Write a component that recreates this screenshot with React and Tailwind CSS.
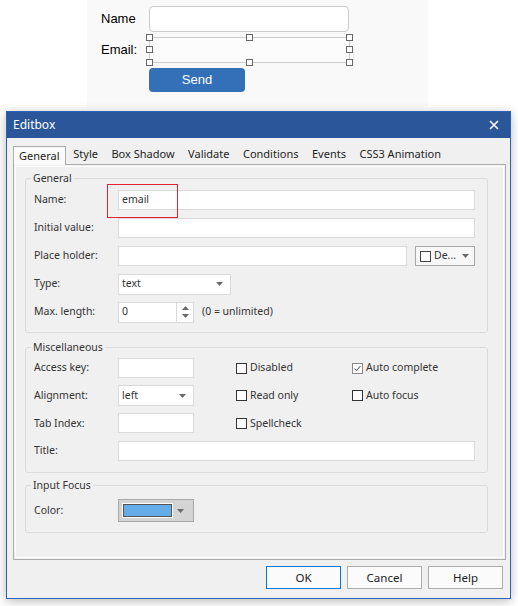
import React from 'react';

const ui = { fontFamily: '"Noto Sans", "Open Sans", sans-serif' };

const Caret = ({ up = false }) => (
    <svg width="7" height="4" viewBox="0 0 7 4">
        <path d={up ? 'M0 4L3.5 0L7 4Z' : 'M0 0L7 0L3.5 4Z'} fill="#6b6b6b" />
    </svg>
);

const Handle = ({ className }) => (
    <span className={`absolute w-[7px] h-[7px] border border-[#666] bg-white ${className}`} />
);

const CheckBox = ({ label, checked = false }) => (
    <div className="flex items-center gap-[3px]">
        <span
            className={`w-[11px] h-[11px] border bg-white flex items-center justify-center ${
                checked ? 'border-[#8a8a8a]' : 'border-[#333]'
            }`}
        >
            {checked && (
                <svg width="9" height="9" viewBox="0 0 9 9">
                    <path d="M1.5 4.5L3.5 6.5L7.5 2" fill="none" stroke="#444" strokeWidth="1" />
                </svg>
            )}
        </span>
        <span>{label}</span>
    </div>
);

const Row = ({ label, children, className = '' }) => (
    <div className={`flex items-center h-[20px] ${className}`}>
        <span className="w-[84px] shrink-0">{label}</span>
        {children}
    </div>
);

const Field = ({ className = '', children }) => (
    <div className={`h-[20px] border border-[#d9d9d9] bg-white flex items-center pl-[3px] ${className}`}>
        {children}
    </div>
);

const Select = ({ value, className = '' }) => (
    <div className={`h-[21px] border border-[#d9d9d9] bg-white flex items-center justify-between pl-[3px] pr-[7px] ${className}`}>
        <span>{value}</span>
        <Caret />
    </div>
);

const Group = ({ title, className = '', children }) => (
    <fieldset className={`ml-[11px] w-[463px] border border-[#dcdcdc] rounded-[3px] pl-[8px] pr-[12px] ${className}`}>
        <legend className="-ml-[3px] px-[2px] leading-[16px]">{title}</legend>
        {children}
    </fieldset>
);

const tabs = ['Style', 'Box Shadow', 'Validate', 'Conditions', 'Events', 'CSS3 Animation'];

export default function App() {
    return (
        <div className="w-[518px] h-[606px] bg-white overflow-hidden">
            {/* Form preview */}
            <div
                className="ml-[87px] w-[341px] h-[107px] bg-[#f9f9f9] pl-[14px] pt-[6px] text-[13px] text-black"
                style={{ fontFamily: '"Liberation Sans", Arial, sans-serif' }}
            >
                <div className="flex items-center h-[26px]">
                    <span className="w-[48px]">Name</span>
                    <div className="w-[200px] h-[26px] bg-white border border-[#cccccc] rounded-[4px]" />
                </div>
                <div className="flex items-center h-[26px] mt-[5px]">
                    <span className="w-[48px]">Email:</span>
                    <div className="relative w-[201px] h-[26px] border border-[#cccccc] bg-[#fcfcfc]">
                        <Handle className="-left-[4px] -top-[4px]" />
                        <Handle className="left-[96px] -top-[4px]" />
                        <Handle className="-right-[4px] -top-[4px]" />
                        <Handle className="-left-[4px] top-[8px]" />
                        <Handle className="-right-[4px] top-[8px]" />
                        <Handle className="-left-[4px] -bottom-[4px]" />
                        <Handle className="left-[96px] -bottom-[4px]" />
                        <Handle className="-right-[4px] -bottom-[4px]" />
                    </div>
                </div>
                <div className="mt-[5px] ml-[48px] w-[96px] h-[24px] bg-[#3370b7] rounded-[4px] text-white flex items-center justify-center">
                    Send
                </div>
            </div>

            {/* Dialog */}
            <div
                className="ml-[6px] mt-[4px] w-[505px] h-[488px] border border-[#2a62b8] bg-[#f0f0f0] shadow-[0_2px_10px_rgba(0,0,0,0.28)]"
                style={ui}
            >
                <div className="h-[26px] bg-[#2b579a] flex items-center justify-between pl-[6px] pr-[11px] text-white text-[12px]">
                    <span>Editbox</span>
                    <svg width="10" height="10" viewBox="0 0 10 10">
                        <path d="M1 1L9 9M9 1L1 9" stroke="white" strokeWidth="1.6" />
                    </svg>
                </div>

                <div className="pt-[8px] text-[11px] text-[#1e1e1e]">
                    {/* Tabs */}
                    <div className="flex h-[18px] ml-[6px]">
                        <div className="relative z-10 h-[19px] px-[5px] border border-b-0 border-[#adadad] bg-[#fafafa] flex items-center pt-[1px]">
                            General
                        </div>
                        <div className="flex ml-[1px]">
                            {tabs.map((t) => (
                                <div key={t} className="px-[6.75px] flex items-center pb-[1px]">
                                    {t}
                                </div>
                            ))}
                        </div>
                    </div>

                    {/* Tab page */}
                    <div className="ml-[6px] w-[493px] h-[396px] border border-[#adadad] shadow-[inset_0_0_0_1px_#f0f0f0,inset_0_0_0_2px_#ffffff] text-[10.5px] text-[#333]">
                        <Group title="General" className="mt-[5px] pt-[4px] pb-[10px]">
                            <div className="flex flex-col gap-[8px]">
                                <Row label="Name:">
                                    <div className="relative flex-1">
                                        <Field>email</Field>
                                        <span className="absolute -left-[11px] -top-[6px] w-[71px] h-[34px] border border-[#e5222d]" />
                                    </div>
                                </Row>
                                <Row label="Initial value:">
                                    <Field className="flex-1" />
                                </Row>
                                <Row label="Place holder:">
                                    <Field className="flex-1" />
                                    <div className="ml-[8px] w-[60px] h-[20px] border border-[#a6a6a6] bg-[#f7f7f7] flex items-center pl-[4px] pr-[5px]">
                                        <span className="w-[11px] h-[11px] border border-[#444] bg-white" />
                                        <span className="ml-[3px] flex-1">De...</span>
                                        <Caret />
                                    </div>
                                </Row>
                                <Row label="Type:">
                                    <Select value="text" className="w-[113px]" />
                                </Row>
                                <Row label="Max. length:">
                                    <Field className="w-[59px] h-[21px]">0</Field>
                                    <div className="-ml-[1px] w-[18px] h-[21px] border border-[#d9d9d9] bg-white flex flex-col items-center justify-center gap-[4px]">
                                        <Caret up />
                                        <Caret />
                                    </div>
                                    <span className="ml-[8px]">(0 = unlimited)</span>
                                </Row>
                            </div>
                        </Group>

                        <Group title="Miscellaneous" className="mt-[6px] pt-[3px] pb-[11px]">
                            <div className="flex flex-col gap-[7.7px]">
                                <Row label="Access key:">
                                    <Field className="w-[76px]" />
                                    <div className="ml-[42px] w-[116px]">
                                        <CheckBox label="Disabled" />
                                    </div>
                                    <CheckBox label="Auto complete" checked />
                                </Row>
                                <Row label="Alignment:">
                                    <Select value="left" className="w-[76px]" />
                                    <div className="ml-[42px] w-[116px]">
                                        <CheckBox label="Read only" />
                                    </div>
                                    <CheckBox label="Auto focus" />
                                </Row>
                                <Row label="Tab Index:">
                                    <Field className="w-[76px]" />
                                    <div className="ml-[42px] w-[116px]">
                                        <CheckBox label="Spellcheck" />
                                    </div>
                                </Row>
                                <Row label="Title:">
                                    <Field className="flex-1" />
                                </Row>
                            </div>
                        </Group>

                        <Group title="Input Focus" className="mt-[4px] pt-[6px] pb-[10px]">
                            <div className="flex items-center h-[23px]">
                                <span className="w-[84px] shrink-0">Color:</span>
                                <div className="w-[76px] h-[23px] border border-[#a9a9a9] bg-[#d4d4d4] flex items-center pl-[3px] pr-[6px]">
                                    <span className="w-[51px] h-[15px] border border-white shadow-[inset_0_0_0_1px_#555] bg-[#64ade8]" />
                                    <span className="flex-1 flex justify-center">
                                        <Caret />
                                    </span>
                                </div>
                            </div>
                        </Group>
                    </div>

                    {/* Buttons */}
                    <div className="flex justify-end gap-[6px] mt-[6px] pr-[7px] text-[11.5px] text-[#222]">
                        <button className="w-[75px] h-[23px] border border-[#0078d7] bg-[#fbfbfb]">OK</button>
                        <button className="w-[75px] h-[23px] border border-[#adadad] bg-[#fbfbfb]">Cancel</button>
                        <button className="w-[75px] h-[23px] border border-[#adadad] bg-[#fbfbfb]">Help</button>
                    </div>
                </div>
            </div>
        </div>
    );
}
